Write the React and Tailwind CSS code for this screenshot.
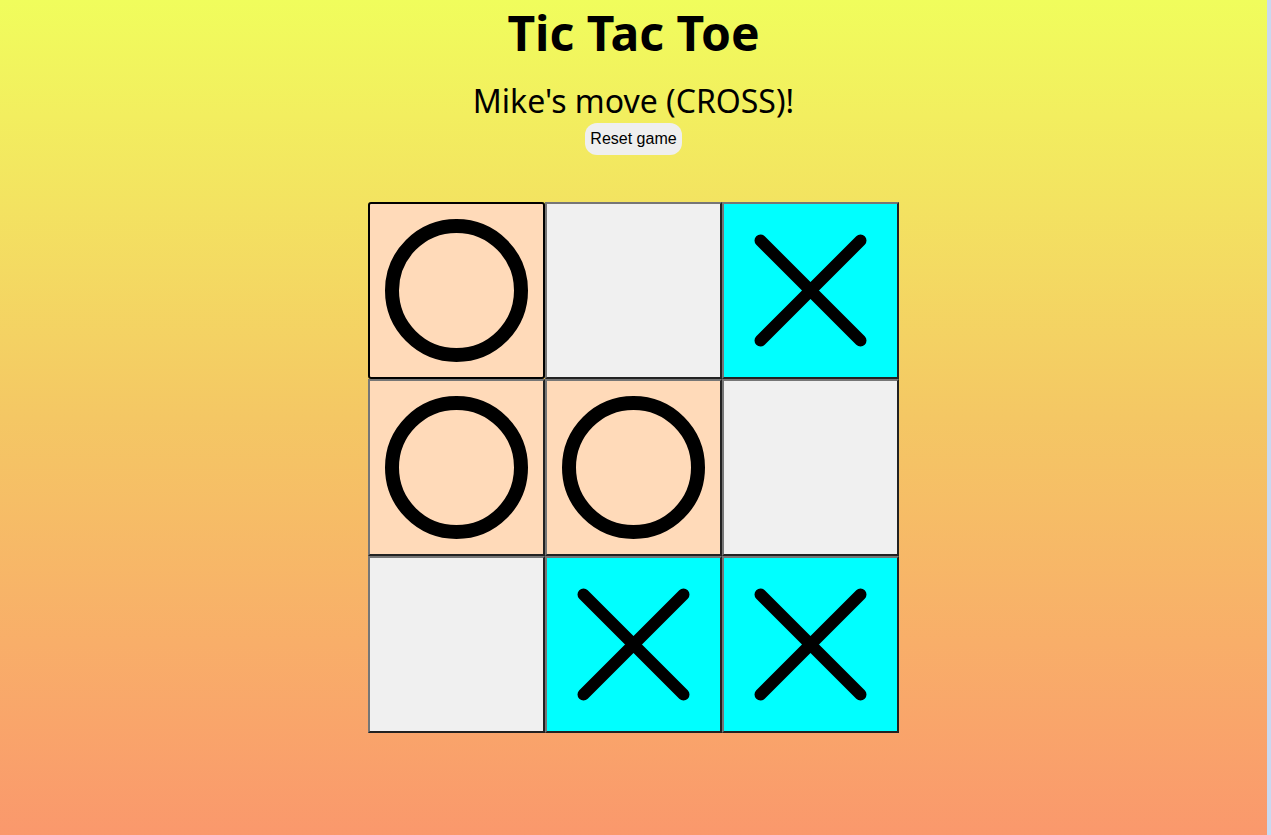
import React from 'react';

const board = ['O', null, 'X', 'O', 'O', null, null, 'X', 'X'];

function Circle() {
  return (
    <svg width="173" height="173" viewBox="0 0 173 173">
      <circle cx="86.5" cy="86.5" r="64.5" fill="none" stroke="black" strokeWidth="14" />
    </svg>
  );
}

function Cross() {
  return (
    <svg width="173" height="173" viewBox="0 0 173 173">
      <path d="M36.5 36.5 L136.5 136.5 M136.5 36.5 L36.5 136.5" stroke="black" strokeWidth="12" strokeLinecap="round" />
    </svg>
  );
}

function Cell({ value, focused }) {
  const bg = value === 'O' ? 'bg-[#ffdab9]' : value === 'X' ? 'bg-[#00ffff]' : 'bg-[#f0f0f0]';
  const border = focused
    ? 'border-black rounded-[3px]'
    : 'border-t-[#767676] border-l-[#767676] border-r-[#222] border-b-[#222]';
  return (
    <button className={`w-[177px] h-[177px] border-2 flex items-center justify-center p-0 ${bg} ${border}`}>
      {value === 'O' && <Circle />}
      {value === 'X' && <Cross />}
    </button>
  );
}

export default function App() {
  return (
    <div className="flex h-[835px] w-full overflow-hidden">
      <div className="flex-1 flex flex-col items-center bg-gradient-to-b from-[#f0fd5c] via-[#f4c764] to-[#fa986c] font-['Noto_Sans',sans-serif] text-black">
        <h1 className="text-[48px] font-bold leading-[66px] mt-0">Tic Tac Toe</h1>
        <p className="text-[32px] leading-[44px] mt-[13px]">Mike's move (CROSS)!</p>
        <button className="mt-0 bg-[#efefef] rounded-[12px] px-[5px] h-[32px] text-[16px] font-['Liberation_Sans',Arial,sans-serif]">
          Reset game
        </button>
        <div className="grid grid-cols-[177px_177px_177px] mt-[47px]">
          {board.map((v, i) => (
            <Cell key={i} value={v} focused={i === 0} />
          ))}
        </div>
      </div>
      <div className="w-[4px] bg-[#c9d9f1]" />
    </div>
  );
}
